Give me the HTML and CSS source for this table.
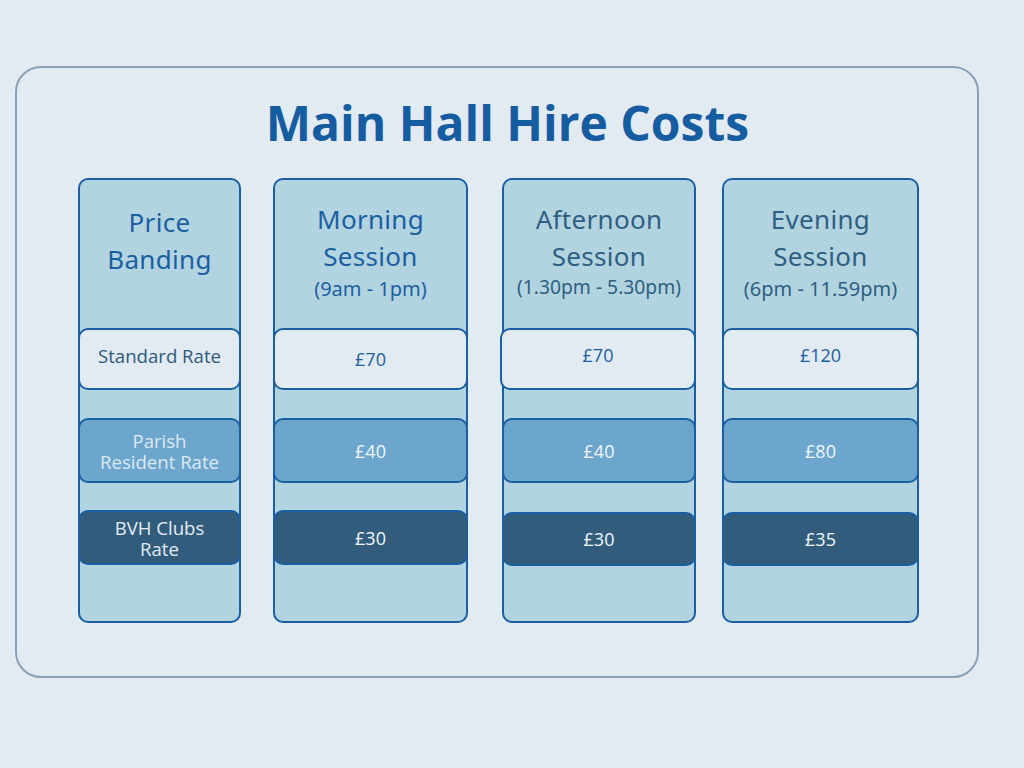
FILE: index.html
```html
<!DOCTYPE html>
<html lang="en">
<head>
<meta charset="utf-8">
<title>Main Hall Hire Costs</title>
<link rel="stylesheet" href="styles.css">
</head>
<body>
<div class="card">
  <h1 class="title">Main Hall Hire Costs</h1>
  <div class="columns">
    <div class="col col-band">
      <div class="head head-band">
        <div class="head-main">Price<br>Banding</div>
      </div>
      <div class="cell cell-std cell-up"><span class="std-label">Standard Rate</span></div>
      <div class="cell cell-parish"><div class="two-line"><div>Parish</div><div>Resident Rate</div></div></div>
      <div class="cell cell-club"><div class="two-line"><div>BVH Clubs</div><div>Rate</div></div></div>
    </div>
    <div class="col col-morning">
      <div class="head">
        <div class="head-main">Morning<br>Session</div>
        <div class="head-sub">(9am - 1pm)</div>
      </div>
      <div class="cell cell-std"><span class="price-std">£70</span></div>
      <div class="cell cell-parish"><span class="price">£40</span></div>
      <div class="cell cell-club"><span class="price">£30</span></div>
    </div>
    <div class="col col-afternoon">
      <div class="head head-dark">
        <div class="head-main">Afternoon<br>Session</div>
        <div class="head-sub head-sub-small">(1.30pm - 5.30pm)</div>
      </div>
      <div class="cell cell-std cell-up cell-wide"><span class="price-std">£70</span></div>
      <div class="cell cell-parish"><span class="price">£40</span></div>
      <div class="cell cell-club cell-low"><span class="price">£30</span></div>
    </div>
    <div class="col col-evening">
      <div class="head head-dark">
        <div class="head-main">Evening<br>Session</div>
        <div class="head-sub">(6pm - 11.59pm)</div>
      </div>
      <div class="cell cell-std cell-up"><span class="price-std">£120</span></div>
      <div class="cell cell-parish"><span class="price">£80</span></div>
      <div class="cell cell-club cell-low"><span class="price">£35</span></div>
    </div>
  </div>
</div>
</body>
</html>
```

FILE: styles.css
```css
* { box-sizing: border-box; }

html, body {
  margin: 0;
  padding: 0;
  background: #e2eaf2;
}

body {
  width: 1024px;
  height: 768px;
  overflow: hidden;
  font-family: "Open Sans", "Liberation Sans", sans-serif;
}

.card {
  margin: 66px 0 0 15px;
  width: 964px;
  height: 612px;
  border: 2px solid #8aa2b8;
  border-radius: 26px;
  background: #e2eaf2;
}

.title {
  margin: 0;
  padding: 27px 0 0 21px;
  height: 110px;
  font-family: "Open Sans", "Liberation Sans", sans-serif;
  font-weight: 700;
  font-size: 48px;
  line-height: 56px;
  color: #165ca0;
  text-align: center;
}

.columns {
  display: flex;
  align-items: flex-start;
  padding-left: 61px;
}

.col {
  display: flex;
  flex-direction: column;
  height: 445px;
  background: #b2d4e0;
  border: 2px solid #1b5fa3;
  border-radius: 10px;
}

.col-band { width: 163px; }
.col-morning { width: 195px; margin-left: 32px; }
.col-afternoon { width: 194px; margin-left: 34px; }
.col-evening { width: 197px; margin-left: 26px; }

.head {
  height: 148px;
  padding-top: 21px;
  text-align: center;
  color: #1b5fa3;
  font-family: "Noto Sans", "Open Sans", sans-serif;
}

.head-band { padding-top: 24px; }
.head-dark { color: #2e5f82; }

.head-main {
  font-size: 26px;
  line-height: 37px;
  letter-spacing: 0.3px;
}

.head-sub {
  font-size: 20px;
  line-height: 28px;
  margin-top: 0;
}

.head-sub-small {
  font-size: 19.3px;
  margin-top: -2px;
}

.cell {
  display: flex;
  align-items: center;
  justify-content: center;
  margin: 0 -2px;
  border: 2px solid #1b5fa3;
  border-radius: 10px;
  text-align: center;
}

.cell-std {
  height: 62px;
  background: #e2eaf2;
}

.cell-up { padding-bottom: 8px; }
.cell-wide { margin-left: -4px; }

.cell-parish {
  height: 65px;
  margin-top: 28px;
  background: #6ca6cc;
}

.cell-club {
  height: 55px;
  margin-top: 27px;
  background: #315c7c;
}

.cell-low {
  height: 54px;
  margin-top: 29px;
}

.std-label {
  font-size: 18.6px;
  color: #2e5a7c;
}

.price-std {
  font-size: 18px;
  color: #1b5fa3;
}

.two-line {
  display: flex;
  flex-direction: column;
  align-items: center;
  font-size: 18.6px;
  line-height: 21px;
  color: #e4ecf3;
}

.cell-parish .two-line { color: #dde9f2; }

.price {
  font-size: 18px;
  color: #f2f6fa;
}
```
